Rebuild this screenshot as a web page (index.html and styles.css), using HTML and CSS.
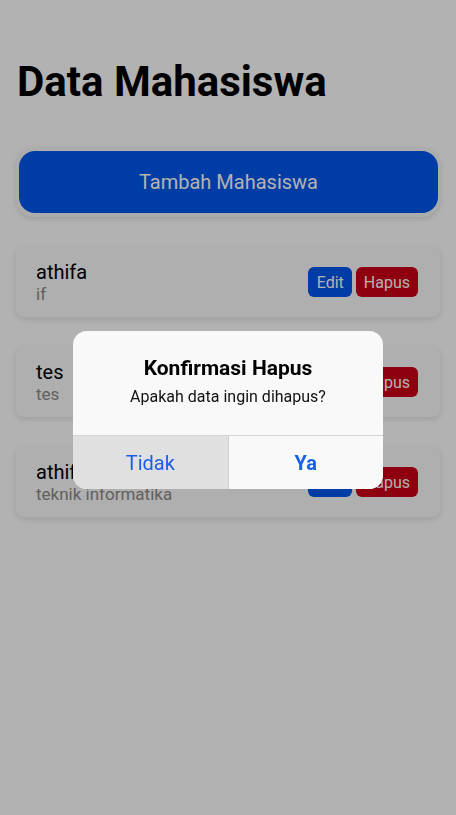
FILE: index.html
```html
<!DOCTYPE html>
<html lang="id">
<head>
<meta charset="utf-8">
<title>Data Mahasiswa</title>
<link rel="stylesheet" href="styles.css">
</head>
<body>
<main class="page">
  <h1 class="title">Data Mahasiswa</h1>
  <div class="add-wrap">
    <button class="add-btn">Tambah Mahasiswa</button>
  </div>
  <ul class="list">
    <li class="card">
      <div class="info"><span class="name">athifa</span><span class="major">if</span></div>
      <div class="actions"><button class="btn edit">Edit</button><button class="btn del">Hapus</button></div>
    </li>
    <li class="card">
      <div class="info"><span class="name">tes</span><span class="major">tes</span></div>
      <div class="actions"><button class="btn edit">Edit</button><button class="btn del">Hapus</button></div>
    </li>
    <li class="card">
      <div class="info"><span class="name">athifa</span><span class="major">teknik informatika</span></div>
      <div class="actions"><button class="btn edit">Edit</button><button class="btn del">Hapus</button></div>
    </li>
  </ul>
</main>
<div class="overlay">
  <div class="dialog">
    <div class="dialog-body">
      <h2 class="dialog-title">Konfirmasi Hapus</h2>
      <p class="dialog-msg">Apakah data ingin dihapus?</p>
    </div>
    <div class="dialog-actions">
      <button class="dbtn no">Tidak</button>
      <button class="dbtn yes">Ya</button>
    </div>
  </div>
</div>
</body>
</html>
```
FILE: styles.css
```css
* { box-sizing: border-box; }
html, body { margin: 0; padding: 0; }
body {
  background: #ffffff;
  font-family: Roboto, "Liberation Sans", sans-serif;
  width: 456px;
  height: 815px;
  overflow: hidden;
}
.page {
  padding: 52px 16px 0 16px;
}
.title {
  margin: 0 0 0 1px;
  font-size: 42px;
  font-weight: 700;
  line-height: 60px;
  color: #000;
}
.add-wrap {
  margin-top: 35px;
  background: #f6f6f6;
  border-radius: 18px;
  padding: 4px 2px 4px 3px;
  box-shadow: 0 2px 5px rgba(0,0,0,0.12);
}
.add-btn {
  display: block;
  width: 100%;
  height: 62px;
  border: none;
  border-radius: 16px;
  background: #0057ec;
  color: #ffffff;
  font-family: inherit;
  font-size: 20px;
  padding: 0;
}
.list {
  list-style: none;
  margin: 30px 0 0 0;
  padding: 0;
  display: flex;
  flex-direction: column;
  gap: 30px;
}
.card {
  height: 70px;
  background: #fbfbfb;
  border-radius: 8px;
  box-shadow: 0 2px 6px rgba(0,0,0,0.12);
  display: flex;
  align-items: center;
  justify-content: space-between;
  padding: 0 22px 0 20px;
}
.info {
  display: flex;
  flex-direction: column;
}
.name {
  font-size: 20px;
  line-height: 24px;
  color: #000;
}
.major {
  font-size: 17px;
  line-height: 20px;
  color: #8a8a8a;
}
.actions {
  display: flex;
  gap: 4px;
}
.btn {
  height: 30px;
  border: none;
  border-radius: 6px;
  color: #ffffff;
  font-family: inherit;
  font-size: 16px;
  padding: 0 8px;
}
.edit { background: #0057ec; padding: 0 8px 0 9px; }
.del { background: #cc0017; }
.overlay {
  position: fixed;
  inset: 0;
  background: rgba(0,0,0,0.3);
  display: flex;
  align-items: center;
  justify-content: center;
  padding-top: 5px;
}
.dialog {
  width: 310px;
  background: #f9f9f9;
  border-radius: 14px;
  overflow: hidden;
}
.dialog-body {
  padding: 24px 16px 0 16px;
  height: 104px;
  text-align: center;
}
.dialog-title {
  margin: 0;
  font-size: 21px;
  line-height: 26px;
  font-weight: 700;
  color: #000;
}
.dialog-msg {
  margin: 6px 0 0 0;
  font-size: 16px;
  line-height: 20px;
  color: #111;
}
.dialog-actions {
  display: flex;
  border-top: 1px solid #d4d4d4;
  height: 54px;
}
.dbtn {
  flex: 1;
  border: none;
  font-family: inherit;
  font-size: 20px;
  color: #1a5fe8;
  padding: 0;
}
.no {
  background: #e0e0e0;
  border-right: 1px solid #cfcfcf;
}
.yes {
  background: #f9f9f9;
  font-weight: 700;
}
```
